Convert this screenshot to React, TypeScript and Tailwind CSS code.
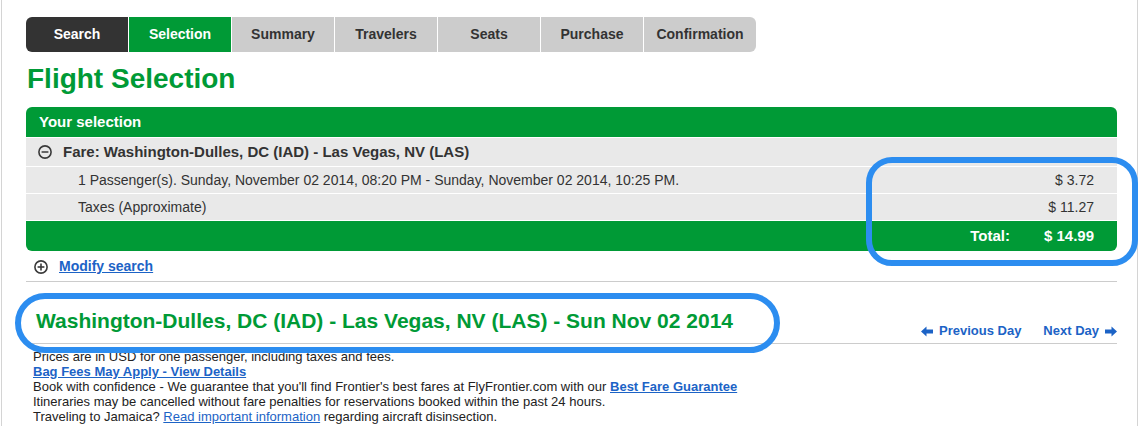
// Flight Selection page
// Booking step tabs, fare summary panel and route header

const steps = ['Search', 'Selection', 'Summary', 'Travelers', 'Seats', 'Purchase', 'Confirmation'];

function CircleIcon({ plus }: { plus?: boolean }) {
    return (
        <svg width="14" height="14" viewBox="0 0 14 14" className="shrink-0">
            <circle cx="7" cy="7" r="6.1" fill="none" stroke="#3a3a3a" strokeWidth="1.6" />
            <line x1="3.6" y1="7" x2="10.4" y2="7" stroke="#3a3a3a" strokeWidth="1.6" />
            {plus && <line x1="7" y1="3.6" x2="7" y2="10.4" stroke="#3a3a3a" strokeWidth="1.6" />}
        </svg>
    );
}

function BlockArrow({ dir }: { dir: 'left' | 'right' }) {
    return (
        <svg width="12" height="11" viewBox="0 0 12 11" className="shrink-0">
            {dir === 'left' ? (
                <path d="M0 5.5 L5.5 0.5 L5.5 3.5 L12 3.5 L12 7.5 L5.5 7.5 L5.5 10.5 Z" fill="#1c63c6" />
            ) : (
                <path d="M12 5.5 L6.5 0.5 L6.5 3.5 L0 3.5 L0 7.5 L6.5 7.5 L6.5 10.5 Z" fill="#1c63c6" />
            )}
        </svg>
    );
}

export default function App() {
    return (
        <div className="relative w-[1140px] h-[426px] overflow-hidden bg-white font-['Liberation_Sans',Arial,sans-serif] text-[#333]">
            <div className="ml-[1px] w-[1137px] h-full border-l border-r border-[#d4d4d4] pl-[24px] pr-[20px] pt-[17px]">
                {/* Step tabs */}
                <div className="flex gap-[1px]">
                    {steps.map((s, i) => (
                        <div
                            key={s}
                            className={`h-[35px] flex items-center justify-center text-[14px] font-bold ${
                                i === 0
                                    ? 'w-[102px] bg-[#333333] text-white rounded-l-[6px]'
                                    : i === 1
                                      ? 'w-[102px] bg-[#009a36] text-white'
                                      : i === 6
                                        ? 'w-[112px] bg-[#cccccc] text-[#333] rounded-r-[6px]'
                                        : 'w-[102px] bg-[#cccccc] text-[#333]'
                            }`}
                        >
                            {s}
                        </div>
                    ))}
                </div>

                {/* Title */}
                <h1 className="mt-[10px] h-[45px] pl-[1px] text-[28px] leading-[34px] font-bold text-[#009a36]">Flight Selection</h1>

                {/* Your selection panel */}
                <div className="rounded-[6px] overflow-hidden">
                    <div className="h-[30px] bg-[#009a36] text-white font-bold text-[15px] flex items-center pl-[13px]">
                        Your selection
                    </div>
                    <div className="h-[29px] bg-[#e9e9e9] border-t border-white flex items-center gap-[11px] pl-[12px] text-[15px] font-bold text-[#333]">
                        <CircleIcon />
                        Fare: Washington-Dulles, DC (IAD) - Las Vegas, NV (LAS)
                    </div>
                    <div className="h-[27px] bg-[#e9e9e9] border-t border-white flex items-center justify-between pl-[52px] pr-[23px] text-[14px]">
                        <span>1 Passenger(s). Sunday, November 02 2014, 08:20 PM - Sunday, November 02 2014, 10:25 PM.</span>
                        <span>$ 3.72</span>
                    </div>
                    <div className="h-[27px] bg-[#e9e9e9] border-t border-white flex items-center justify-between pl-[52px] pr-[23px] text-[14px]">
                        <span>Taxes (Approximate)</span>
                        <span>$ 11.27</span>
                    </div>
                    <div className="h-[31px] bg-[#009a36] border-t border-white flex items-center justify-end gap-[34px] pr-[23px] text-[15px] font-bold text-white">
                        <span>Total:</span>
                        <span>$ 14.99</span>
                    </div>
                </div>

                {/* Modify search */}
                <div className="h-[31px] border-b border-[#cccccc] flex items-center gap-[11px] pl-[8px] pt-[1px]">
                    <CircleIcon plus />
                    <a href="#" className="text-[14px] font-bold text-[#1c63c6] underline">Modify search</a>
                </div>

                {/* Route header */}
                <div className="h-[62px] border-b border-[#cccccc] flex items-end justify-between">
                    <h2 className="pl-[10px] pb-[10px] text-[21px] leading-[24px] font-bold text-[#009a36]">
                        Washington-Dulles, DC (IAD) - Las Vegas, NV (LAS) - Sun Nov 02 2014
                    </h2>
                    <div className="flex items-center gap-[22px] pb-[4px] text-[13px] leading-[16px] font-bold text-[#1c63c6]">
                        <span className="flex items-center gap-[6px]">
                            <BlockArrow dir="left" />
                            Previous Day
                        </span>
                        <span className="flex items-center gap-[6px]">
                            Next Day
                            <BlockArrow dir="right" />
                        </span>
                    </div>
                </div>

                {/* Notes */}
                <div className="mt-[5px] pl-[7px] text-[13px] leading-[15px] text-[#222]">
                    <p>Prices are in USD for one passenger, including taxes and fees.</p>
                    <p>
                        <a href="#" className="font-bold text-[#1c63c6] underline">Bag Fees May Apply - View Details</a>
                    </p>
                    <p>
                        Book with confidence - We guarantee that you'll find Frontier's best fares at FlyFrontier.com with our{' '}
                        <a href="#" className="font-bold text-[#1c63c6] underline">Best Fare Guarantee</a>
                    </p>
                    <p>Itineraries may be cancelled without fare penalties for reservations booked within the past 24 hours.</p>
                    <p>
                        Traveling to Jamaica? <a href="#" className="text-[#1c63c6] underline">Read important information</a> regarding aircraft disinsection.
                    </p>
                </div>
            </div>

            {/* Highlight annotations */}
            <div className="absolute left-[866px] top-[157px] w-[272px] h-[109px] rounded-[26px] border-[6px] border-[#2c8df0]" />
            <div className="absolute left-[15px] top-[293px] w-[765px] h-[60px] rounded-[30px] border-[6px] border-[#2c8df0]" />
        </div>
    );
}
